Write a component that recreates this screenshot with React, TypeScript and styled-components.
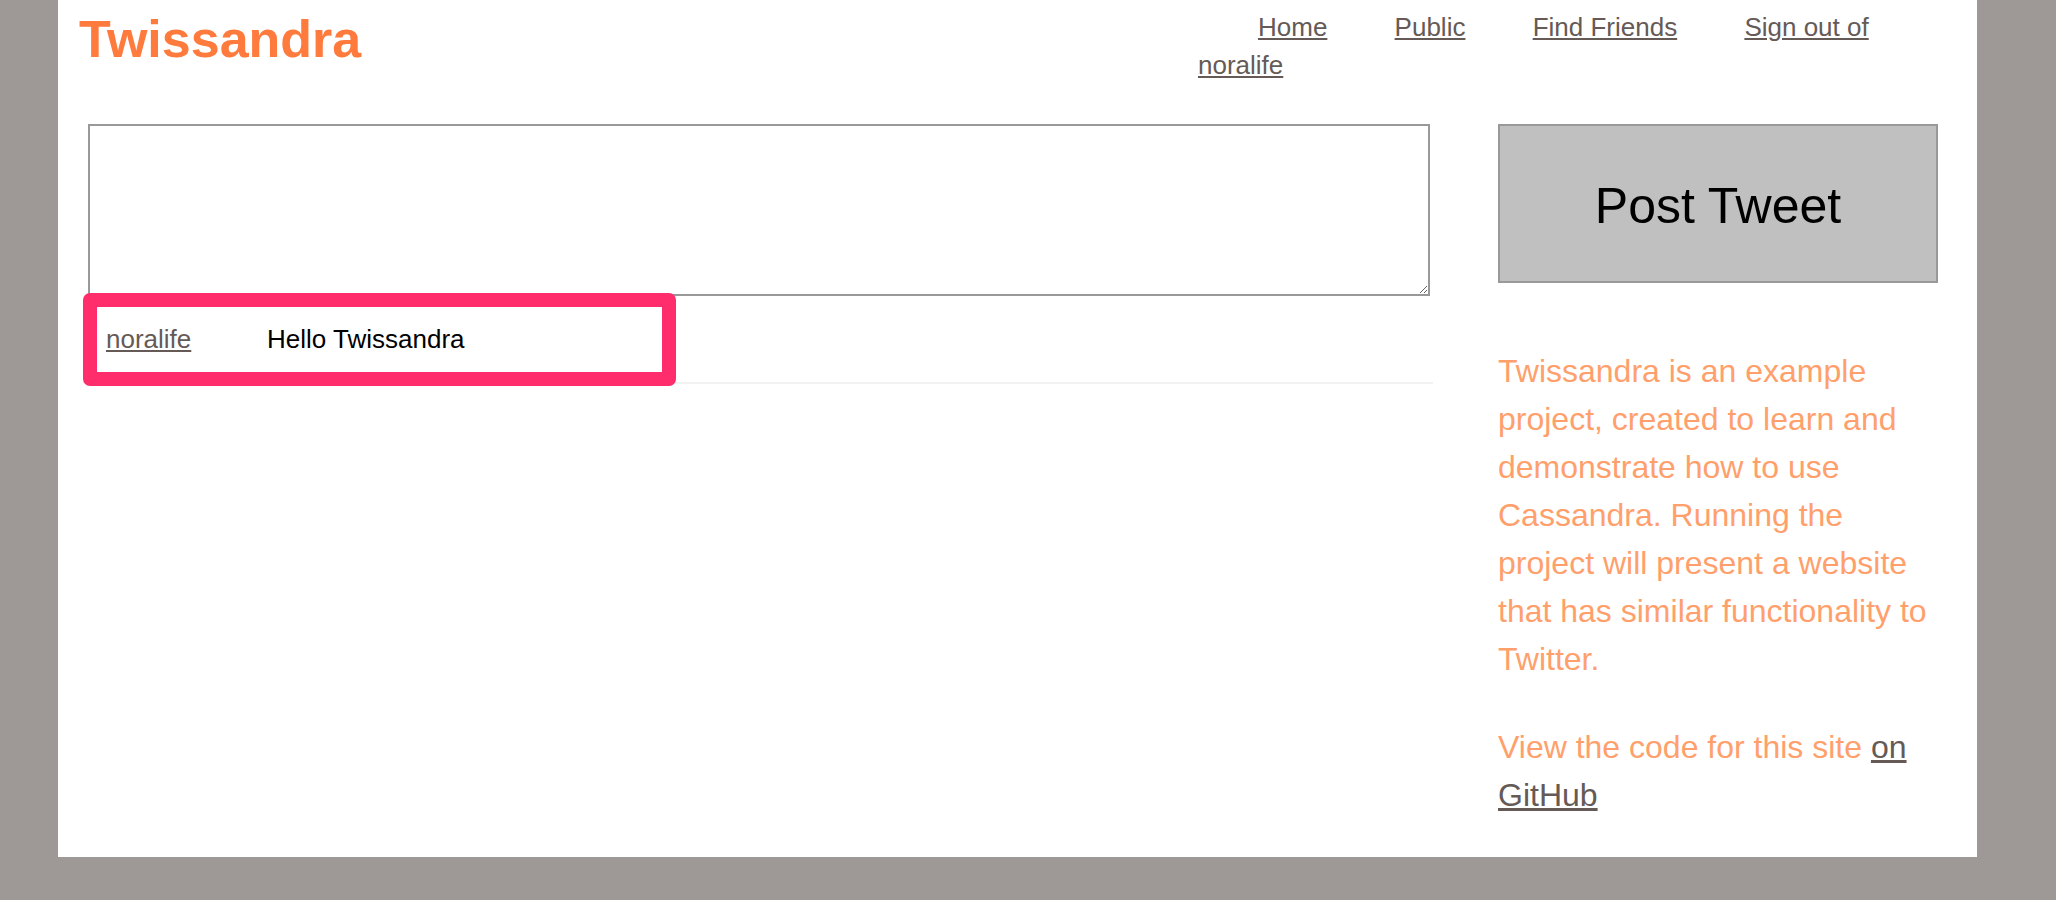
import React from 'react';
import styled, { createGlobalStyle } from 'styled-components';

const Colors = {
    page: '#9e9996',
    white: '#ffffff',
    orange: '#ff7a3d',
    softOrange: '#ffa06c',
    link: '#655a56',
    pink: '#ff2d6b',
    border: '#999999',
    button: '#c0c0c0',
    rule: '#f2f2f2',
};

const GlobalStyle = createGlobalStyle`
    body {
        margin: 0;
        background-color: ${Colors.page};
        font-family: 'Liberation Sans', Arial, Helvetica, sans-serif;
    }
`;

const Container = styled.div`
    margin-left: 58px;
    width: 1919px;
    background-color: ${Colors.white};
    padding-bottom: 38px;
    box-sizing: border-box;
`;

const Header = styled.div`
    display: flex;
    justify-content: space-between;
    align-items: flex-start;
    height: 84px;
`;

const Logo = styled.h1`
    margin: 13px 0 0 21px;
    font-size: 52px;
    line-height: 52px;
    font-weight: 700;
    color: ${Colors.orange};
`;

const Nav = styled.div`
    width: 720px;
    margin: 8px 59px 0 0;
    font-size: 26px;
    line-height: 38px;
`;

const A = styled.a<{ spaced?: boolean }>`
    color: ${Colors.link};
    text-decoration: underline;
    margin-left: ${props => props.spaced ? '60px' : '0px'};
`;

const Main = styled.div`
    display: flex;
    align-items: flex-start;
    gap: 65px;
    margin-top: 40px;
    padding-left: 30px;
`;

const LeftColumn = styled.div`
    width: 1345px;
`;

const TweetBox = styled.textarea`
    display: block;
    width: 1342px;
    height: 172px;
    margin: 0;
    box-sizing: border-box;
    border: 2px solid ${Colors.border};
    font-family: inherit;
    font-size: 26px;
`;

const TweetRow = styled.div`
    position: relative;
    display: flex;
    padding: 28px 0 27px 18px;
    font-size: 26px;
    line-height: 31px;
    border-bottom: 2px solid ${Colors.rule};
`;

const Username = styled.div`
    width: 161px;
`;

const TweetText = styled.div`
    color: #000000;
`;

const Highlight = styled.div`
    position: absolute;
    left: -5px;
    top: -3px;
    width: 593px;
    height: 93px;
    box-sizing: border-box;
    border: 14px solid ${Colors.pink};
    border-radius: 7px;
    pointer-events: none;
`;

const Sidebar = styled.div`
    width: 440px;
`;

const Button = styled.button`
    display: block;
    width: 440px;
    height: 159px;
    padding: 5px 0 0 0;
    box-sizing: border-box;
    background-color: ${Colors.button};
    border: 2px solid ${Colors.border};
    border-radius: 0px;
    color: #000000;
    font-family: inherit;
    font-size: 50px;
    cursor: pointer;
`;

const P = styled.p<{ first?: boolean }>`
    margin: ${props => props.first ? '64px' : '40px'} 0 0 0;
    color: ${Colors.softOrange};
    font-size: 32px;
    line-height: 48px;
`;

class App extends React.Component {
    render() {
        return (
            <Container>
                <GlobalStyle />
                <Header>
                    <Logo>Twissandra</Logo>
                    <Nav>
                        <A spaced href="#">Home</A> <A spaced href="#">Public</A> <A spaced href="#">Find Friends</A> <A spaced href="#">Sign out of noralife</A>
                    </Nav>
                </Header>
                <Main>
                    <LeftColumn>
                        <TweetBox />
                        <TweetRow>
                            <Username><A href="#">noralife</A></Username>
                            <TweetText>Hello Twissandra</TweetText>
                            <Highlight />
                        </TweetRow>
                    </LeftColumn>
                    <Sidebar>
                        <Button>Post Tweet</Button>
                        <P first>
                            Twissandra is an example project, created to learn and demonstrate how to use Cassandra. Running the project will present a website that has similar functionality to Twitter.
                        </P>
                        <P>
                            View the code for this site <A href="#">on GitHub</A>
                        </P>
                    </Sidebar>
                </Main>
            </Container>
        );
    }
}

export default App;
